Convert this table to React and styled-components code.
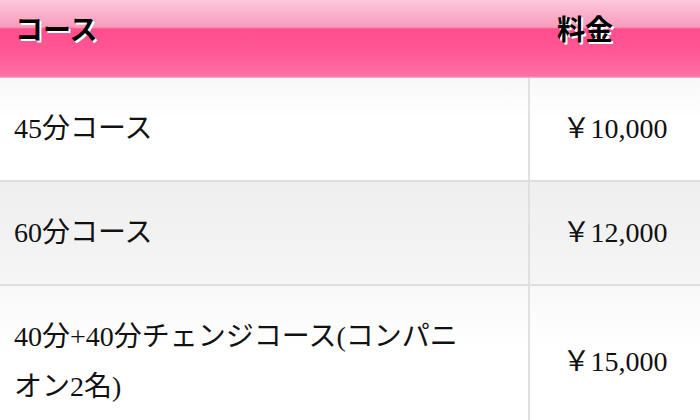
import styled, { createGlobalStyle } from "styled-components";

const GlobalStyle = createGlobalStyle`
  html, body {
    margin: 0;
    padding: 0;
    background: #fff;
  }
  body {
    font-family: "Liberation Serif", "Noto Sans CJK JP", serif;
    color: #111;
  }
`;

const Wrap = styled.div`
  width: 700px;
  height: 420px;
  overflow: hidden;
`;

const Head = styled.div`
  display: grid;
  grid-template-columns: 530px 1fr;
  height: 78px;
  background: linear-gradient(
    to bottom,
    #fdcadd 0,
    #fab0cb 14px,
    #f79cbd 27px,
    #ff4e8e 29px,
    #ff5694 50px,
    #fe6fa6 76px,
    #f8b5cd 78px
  );
`;

const HeadLabel = styled.div`
  padding: 8px 0 0 ${(p) => p.$indent}px;
  font-family: "Noto Sans CJK JP", sans-serif;
  font-weight: 700;
  font-size: 28px;
  line-height: 40px;
  color: #000;
  text-shadow: 2px 2px 0 #fff;
`;

const Row = styled.div`
  display: grid;
  grid-template-columns: 528px 2px 1fr;
  border-bottom: 2px solid #dedede;
  background: ${(p) =>
    p.$alt
      ? "linear-gradient(to bottom, #efefef, #f5f5f5)"
      : "linear-gradient(to bottom, #f8f8f8, #ffffff 40%)"};
`;

const Course = styled.div`
  padding: 26px 56px 26px 14px;
  font-size: 28px;
  line-height: 50px;
`;

const Divider = styled.div`
  background: #e0e0e0;
`;

const Price = styled.div`
  display: flex;
  align-items: center;
  justify-content: center;
  font-size: 28px;
  line-height: 50px;
`;

const rows = [
  { name: "45分コース", price: "￥10,000" },
  { name: "60分コース", price: "￥12,000" },
  { name: "40分+40分チェンジコース(コンパニオン2名)", price: "￥15,000" },
];

export default function App() {
  return (
    <Wrap>
      <GlobalStyle />
      <Head>
        <HeadLabel $indent={15}>コース</HeadLabel>
        <HeadLabel $indent={27}>料金</HeadLabel>
      </Head>
      {rows.map((r, i) => (
        <Row key={r.name} $alt={i % 2 === 1}>
          <Course>{r.name}</Course>
          <Divider />
          <Price>{r.price}</Price>
        </Row>
      ))}
    </Wrap>
  );
}
